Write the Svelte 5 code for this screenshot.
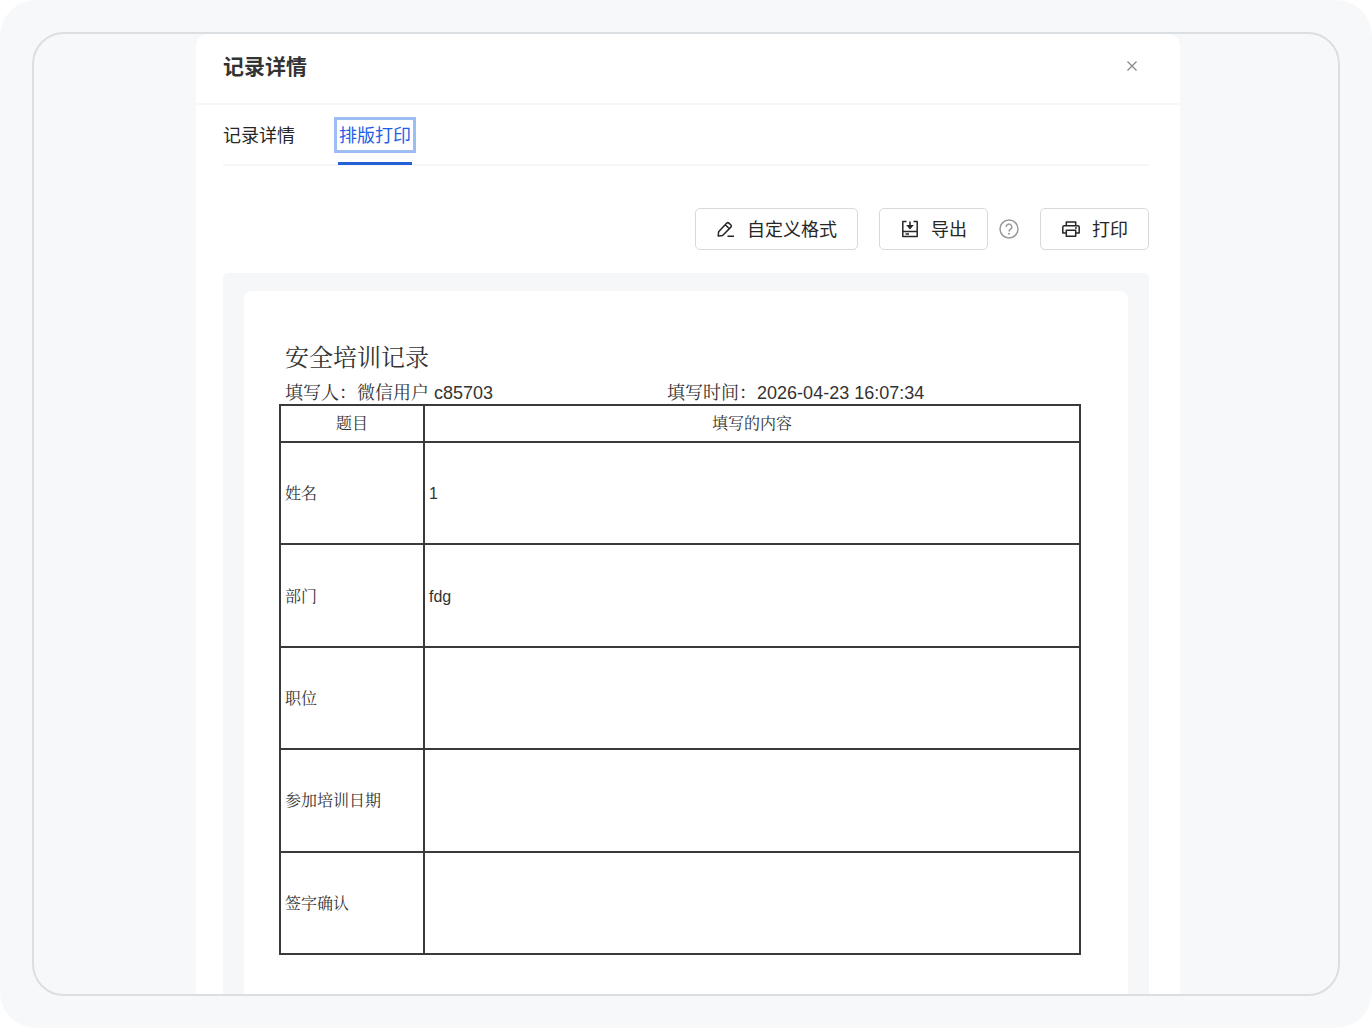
<script lang="ts">
	interface Row {
		label: string;
		value: string;
	}

	const tabs = ['记录详情', '排版打印'];
	let activeTab = $state('排版打印');

	const rows: Row[] = [
		{ label: '姓名', value: '1' },
		{ label: '部门', value: 'fdg' },
		{ label: '职位', value: '' },
		{ label: '参加培训日期', value: '' },
		{ label: '签字确认', value: '' }
	];
</script>

<div class="page">
	<div class="frame">
		<section class="modal">
			<header class="modal-header">
				<h1>记录详情</h1>
				<button class="close-btn" aria-label="关闭">
					<svg width="12" height="12" viewBox="0 0 12 12">
						<path d="M1.5 1.5 10.5 10.5M10.5 1.5 1.5 10.5" />
					</svg>
				</button>
			</header>

			<div class="modal-body">
				<div class="tabs" role="tablist">
					{#each tabs as tab (tab)}
						<button
							class="tab"
							class:active={tab === activeTab}
							role="tab"
							aria-selected={tab === activeTab}
							onclick={() => (activeTab = tab)}
						>
							<span class="tab-label">{tab}</span>
						</button>
					{/each}
				</div>

				<div class="toolbar">
					<button class="tool-btn">
						<svg width="20" height="20" viewBox="0 0 20 20">
							<path d="M2.2 17 2.6 12.8 10.8 4.1a1.5 1.5 0 0 1 2.1 0l2 1.9a1.5 1.5 0 0 1 0 2.1L6.6 16.6ZM9.4 5.8l3.9 3.9M11.5 17.3H18" />
						</svg>
						<span>自定义格式</span>
					</button>
					<div class="export-group">
						<button class="tool-btn">
							<svg width="20" height="20" viewBox="0 0 20 20">
								<path d="M6.5 2.6H2.8v14.8h14.4V2.6h-3.7M2.8 12.6h14.4M5.5 15.1h3.5M10 2.5v6.5" />
								<path class="solid" d="M6.2 6.1h7.6L10 10.4Z" />
							</svg>
							<span>导出</span>
						</button>
						<button class="help-btn" aria-label="帮助">
							<svg width="20" height="20" viewBox="0 0 20 20">
								<circle cx="10" cy="10" r="9" />
								<path d="M7.2 8a2.8 2.8 0 1 1 4.4 2.2c-1 .7-1.6 1.1-1.6 2.2" />
								<circle class="dot" cx="10" cy="14.7" r="1" />
							</svg>
						</button>
					</div>
					<button class="tool-btn">
						<svg width="20" height="20" viewBox="0 0 20 20">
							<path d="M5.3 6.6V2.9h9.4v3.7M5.3 14.1H1.8V8.2a1.5 1.5 0 0 1 1.5-1.5h13.4a1.5 1.5 0 0 1 1.5 1.5v5.9h-3.5M5.3 11.2h9.4v6H5.3ZM14 9h1.8" />
						</svg>
						<span>打印</span>
					</button>
				</div>

				<div class="preview">
					<article class="paper">
						<h2>安全培训记录</h2>
						<div class="meta">
							<span>填写人：微信用户 c85703</span>
							<span>填写时间：2026-04-23 16:07:34</span>
						</div>
						<table>
							<thead>
								<tr>
									<th class="label-col">题目</th>
									<th>填写的内容</th>
								</tr>
							</thead>
							<tbody>
								{#each rows as row (row.label)}
									<tr>
										<td>{row.label}</td>
										<td>{row.value}</td>
									</tr>
								{/each}
							</tbody>
						</table>
					</article>
				</div>
			</div>
		</section>
	</div>
</div>

<style>
	:global(body) {
		background: #fff;
	}

	* {
		box-sizing: border-box;
	}

	.page {
		height: 100vh;
		padding: 32px;
		background: #f6f8fa;
		border-radius: 36px;
		color: #262626;
		font-family: 'Noto Sans CJK SC', 'Noto Sans', sans-serif;
	}

	.frame {
		height: 100%;
		padding: 0 158px 0 162px;
		overflow: hidden;
		border: 2px solid #dcdfe1;
		border-radius: 32px;
	}

	.modal {
		display: flex;
		flex-direction: column;
		height: 100%;
		background: #fff;
		border-radius: 12px 12px 0 0;
	}

	.modal-header {
		display: flex;
		align-items: flex-start;
		justify-content: space-between;
		height: 71px;
		flex-shrink: 0;
		padding: 16px 40px 0 27px;
		border-bottom: 2px solid #f6f7f8;
	}

	h1 {
		margin: 0;
		color: #333;
		font-size: 21px;
		font-weight: 700;
		line-height: 30px;
	}

	button {
		padding: 0;
		border: none;
		background: none;
		color: inherit;
		font-family: inherit;
		cursor: pointer;
	}

	svg {
		display: block;
		fill: none;
		stroke: currentColor;
		stroke-width: 1.5;
		stroke-linejoin: round;
	}

	.close-btn {
		display: flex;
		align-items: center;
		justify-content: center;
		width: 16px;
		height: 32px;
		color: #8a8a8a;
	}

	.close-btn svg {
		stroke-width: 1.3;
	}

	.modal-body {
		display: flex;
		flex: 1;
		flex-direction: column;
		min-height: 0;
		padding: 0 31px 0 27px;
	}

	.tabs {
		display: flex;
		height: 61px;
		flex-shrink: 0;
		gap: 42px;
		border-bottom: 2px solid #f5f6f7;
	}

	.tab {
		display: flex;
		align-items: flex-start;
		height: 60px;
		padding-top: 15px;
		font-size: 18px;
		line-height: 28px;
	}

	.tab.active {
		position: relative;
		color: #1f5fe8;
	}

	.tab.active .tab-label {
		padding: 0 2px 2px;
		outline: 3px solid #9dbef5;
	}

	.tab.active::after {
		position: absolute;
		right: 1px;
		bottom: 0;
		left: 1px;
		height: 3px;
		background: #2460d8;
		content: '';
	}

	.toolbar {
		display: flex;
		flex-shrink: 0;
		justify-content: flex-end;
		gap: 21px;
		padding: 42px 0 23px;
	}

	.export-group {
		display: flex;
		align-items: center;
		gap: 11px;
	}

	.tool-btn {
		display: flex;
		align-items: center;
		gap: 11px;
		height: 42px;
		padding: 0 20px 2px;
		background: #fff;
		border: 1px solid #d9d9d9;
		border-radius: 5px;
		font-size: 18px;
		line-height: 26px;
	}

	.tool-btn svg {
		margin-top: 2px;
	}

	.help-btn {
		color: #999;
	}

	.help-btn .dot,
	.solid {
		fill: currentColor;
		stroke: none;
	}

	.preview {
		flex: 1;
		min-height: 0;
		padding: 18px 21px 0;
		background: #f6f7f9;
		border-radius: 5px 5px 0 0;
	}

	.paper {
		height: 100%;
		padding: 48px 47px 0 35px;
		background: #fff;
		border-radius: 8px 8px 0 0;
		color: #333;
		font-family: 'Liberation Sans', SimSun, 'Noto Serif CJK SC', 'Noto Sans CJK SC', sans-serif;
	}

	h2 {
		margin: 0;
		padding-left: 6px;
		font-size: 24px;
		font-weight: 400;
		line-height: 38px;
	}

	.meta {
		display: grid;
		grid-template-columns: 48% 1fr;
		padding: 6px 0 0 6px;
		font-size: 18px;
		line-height: 21px;
	}

	table {
		width: 100%;
		height: 551px;
		border-collapse: collapse;
		table-layout: fixed;
		font-size: 16px;
		line-height: 24px;
	}

	th,
	td {
		padding: 0 4px;
		border: 2px solid #3a3a3a;
		font-weight: 400;
	}

	th {
		height: 37px;
		text-align: center;
	}

	td {
		padding-top: 2px;
		text-align: left;
	}

	.label-col {
		width: 18%;
	}
</style>
